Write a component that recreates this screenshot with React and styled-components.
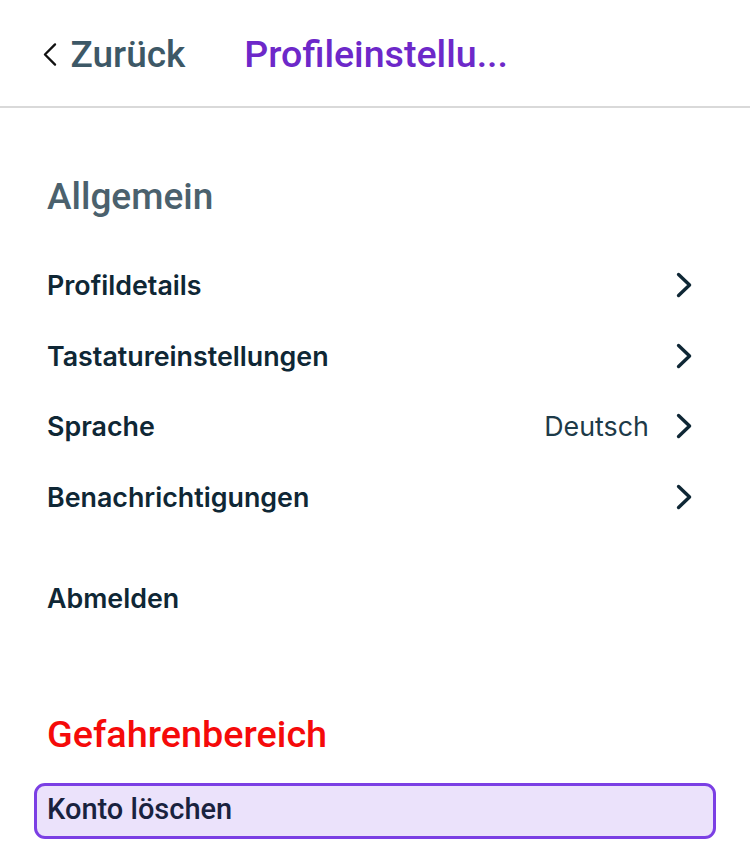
import React from "react";
import styled, { createGlobalStyle } from "styled-components";

const GlobalStyle = createGlobalStyle`
  html, body {
    margin: 0;
    padding: 0;
    background: #fff;
  }
  * {
    box-sizing: border-box;
  }
`;

const Page = styled.div`
  width: 750px;
  min-height: 852px;
  background: #fff;
  font-family: "Roboto", "Liberation Sans", sans-serif;
`;

const Header = styled.header`
  height: 108px;
  display: flex;
  align-items: center;
  padding: 2px 0 0 42px;
  border-bottom: 2px solid #d9d9d9;
`;

const BackButton = styled.button`
  display: flex;
  align-items: center;
  gap: 13px;
  background: none;
  border: 0;
  padding: 0;
  cursor: pointer;
  font-family: "Roboto", "Liberation Sans", sans-serif;
  font-weight: 500;
  font-size: 37px;
  color: #3d5866;
  margin-right: 59px;
`;

const Title = styled.h1`
  margin: 0;
  font-weight: 500;
  font-size: 37.6px;
  color: #6d28c9;
`;

const Content = styled.main`
  padding: 0 47px 0 47px;
`;

const SectionTitle = styled.h2`
  margin: 0;
  font-weight: 500;
  font-size: ${({ $danger }) => ($danger ? 37.8 : 37)}px;
  line-height: 44px;
  color: ${({ $danger }) => ($danger ? "#f50a0a" : "#4b616d")};
  padding-top: ${({ $top }) => $top}px;
  padding-bottom: ${({ $bottom }) => $bottom}px;
`;

const Row = styled.div`
  height: 70.5px;
  display: flex;
  align-items: center;
  justify-content: space-between;
  font-family: "Inter", "Liberation Sans", sans-serif;
  font-size: 26.8px;
  color: #0f2735;
  cursor: pointer;
`;

const RowLabel = styled.span`
  font-weight: 600;
`;

const RowEnd = styled.span`
  display: flex;
  align-items: center;
  gap: 27px;
  padding-right: 11px;
`;

const RowValue = styled.span`
  font-weight: 400;
  color: #1d3a48;
`;

const Logout = styled(Row)`
  margin-top: 31px;
`;

const DangerButton = styled.button`
  display: block;
  width: calc(100% + 26px);
  margin-left: -13px;
  height: 56px;
  padding: 0 0 3px 10px;
  text-align: left;
  background: #ebe2fb;
  border: 3px solid #7b3fe4;
  border-radius: 11px;
  font-family: "Roboto", "Liberation Sans", sans-serif;
  font-weight: 500;
  font-size: 29px;
  color: #19223f;
  cursor: pointer;
`;

const Chevron = ({ dir = "right", size = 26, stroke = 3.4, color = "#0f2735" }) => (
  <svg width={size * 0.62} height={size} viewBox="0 0 16 26" fill="none">
    <path
      d={dir === "right" ? "M2.5 2.5 L13.5 13 L2.5 23.5" : "M13.5 2.5 L3 13 L13.5 23.5"}
      stroke={color}
      strokeWidth={stroke}
      strokeLinecap="round"
      strokeLinejoin="round"
    />
  </svg>
);

const items = [
  { label: "Profildetails" },
  { label: "Tastatureinstellungen" },
  { label: "Sprache", value: "Deutsch" },
  { label: "Benachrichtigungen" },
];

export default function App() {
  return (
    <Page>
      <GlobalStyle />
      <Header>
        <BackButton>
          <Chevron dir="left" size={25} stroke={2.4} color="#111" />
          Zurück
        </BackButton>
        <Title>Profileinstellu...</Title>
      </Header>
      <Content>
        <SectionTitle $top={67} $bottom={31}>Allgemein</SectionTitle>
        {items.map((item) => (
          <Row key={item.label}>
            <RowLabel>{item.label}</RowLabel>
            <RowEnd>
              {item.value && <RowValue>{item.value}</RowValue>}
              <Chevron />
            </RowEnd>
          </Row>
        ))}
        <Logout>
          <RowLabel>Abmelden</RowLabel>
        </Logout>
        <SectionTitle $top={78} $bottom={27} $danger>Gefahrenbereich</SectionTitle>
        <DangerButton>Konto löschen</DangerButton>
      </Content>
    </Page>
  );
}
